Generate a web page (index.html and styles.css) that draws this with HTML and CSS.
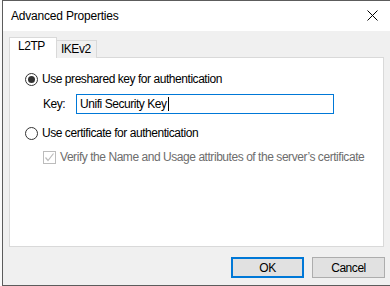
FILE: index.html
```html
<!DOCTYPE html>
<html lang="en">
<head>
    <meta charset="UTF-8">
    <title>Advanced Properties</title>
    <link rel="stylesheet" href="styles.css">
</head>
<body>
    <div class="window">
        <div class="titlebar">
            <span class="title">Advanced Properties</span>
            <svg class="close" width="11" height="11" viewBox="0 0 11 11">
                <path d="M0.5 0.5 L10.5 10.5 M10.5 0.5 L0.5 10.5" stroke="#000" stroke-width="1" fill="none"/>
            </svg>
        </div>

        <div class="content">
            <div class="tabs">
                <div class="tab active">L2TP</div>
                <div class="tab">IKEv2</div>
            </div>

            <div class="panel">
                <label class="option">
                    <span class="radio checked"></span>
                    Use preshared key for authentication
                </label>
                <div class="key-row">
                    <span class="key-label">Key:</span>
                    <div class="key-input">Unifi Security Key<span class="caret"></span></div>
                </div>
                <label class="option second">
                    <span class="radio"></span>
                    Use certificate for authentication
                </label>
                <label class="check-row">
                    <span class="checkbox">
                        <svg width="11" height="11" viewBox="0 0 11 11">
                            <path d="M1.5 5.5 L4 8.5 L9.5 1.5" stroke="#bcbcbc" stroke-width="1.2" fill="none"/>
                        </svg>
                    </span>
                    Verify the Name and Usage attributes of the server’s certificate
                </label>
            </div>

            <div class="actions">
                <button class="button default">OK</button>
                <button class="button">Cancel</button>
            </div>
        </div>
    </div>
</body>
</html>
```

FILE: styles.css
```css
body {
    margin: 0;
    background-color: #fafafa;
    font-family: "Liberation Sans", Arial, sans-serif;
    font-size: 12px;
    letter-spacing: -0.45px;
    color: #000;
}
.window {
    margin-left: 2px;
    width: 400px;
    border-top: 1px solid #5c5c5c;
    border-left: 1px solid #5c5c5c;
    border-bottom: 1px solid #5c5c5c;
    background-color: #f0f0f0;
}
.titlebar {
    height: 30px;
    background-color: #fff;
    display: flex;
    align-items: center;
    justify-content: space-between;
    padding: 0 25px 0 8px;
}
.title {
    margin-top: -1px;
    letter-spacing: -0.2px;
}
.close {
    margin-top: -1px;
}
.content {
    padding: 7px 0 7px 6px;
}
.tabs {
    display: flex;
    align-items: flex-end;
    height: 20px;
    position: relative;
    z-index: 1;
}
.tab {
    height: 17px;
    line-height: 17px;
    padding: 0 5px 0 4px;
    border: 1px solid #d9d9d9;
    border-bottom: none;
    border-left: none;
    background-color: #f0f0f0;
}
.tab.active {
    height: 20px;
    line-height: 17px;
    padding: 0 11px 0 8px;
    border-left: 1px solid #d9d9d9;
    background-color: #fff;
}
.panel {
    width: 375px;
    height: 190px;
    margin-top: -1px;
    background-color: #fff;
    border: 1px solid #d9d9d9;
    padding: 0 0 0 15px;
    box-sizing: border-box;
    white-space: nowrap;
}
.option {
    display: flex;
    align-items: center;
    gap: 4px;
    height: 16px;
    margin-top: 13px;
}
.option.second {
    margin-top: 11px;
}
.radio {
    width: 11px;
    height: 11px;
    border: 1px solid #333;
    border-radius: 50%;
    display: flex;
    align-items: center;
    justify-content: center;
}
.radio.checked::after {
    content: "";
    width: 7px;
    height: 7px;
    border-radius: 50%;
    background-color: #333;
}
.key-row {
    display: flex;
    align-items: center;
    margin-top: 7px;
    padding-left: 18px;
}
.key-label {
    width: 33px;
}
.key-input {
    width: 253px;
    height: 18px;
    line-height: 18px;
    border: 1px solid #0078d7;
    padding-left: 3px;
    display: flex;
    align-items: center;
}
.caret {
    width: 1px;
    height: 14px;
    background-color: #000;
    margin-left: 1px;
}
.check-row {
    display: flex;
    align-items: center;
    gap: 4px;
    height: 16px;
    margin-top: 8px;
    padding-left: 18px;
    color: #6d6d6d;
}
.checkbox {
    width: 11px;
    height: 11px;
    border: 1px solid #bcbcbc;
    display: flex;
}
.actions {
    display: flex;
    gap: 8px;
    padding-left: 222px;
    margin-top: 10px;
}
.button {
    width: 73px;
    height: 21px;
    font-family: inherit;
    font-size: inherit;
    letter-spacing: inherit;
    background-color: #e1e1e1;
    border: 1px solid #adadad;
    padding: 0;
    color: #000;
}
.button.default {
    border: 2px solid #0078d7;
}
```
